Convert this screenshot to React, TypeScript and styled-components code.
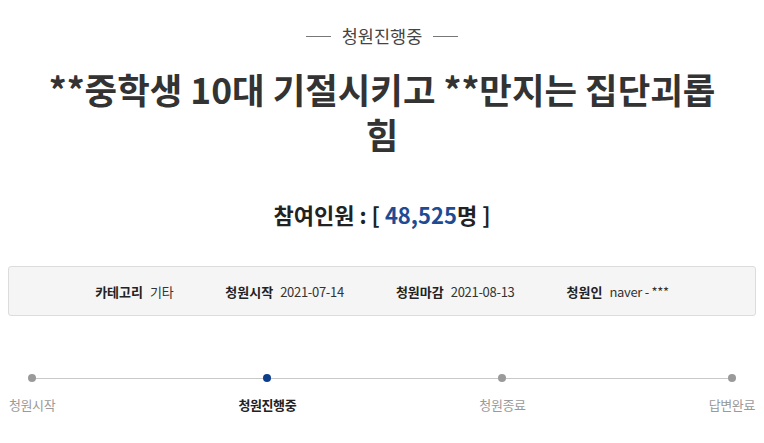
import React from "react";
import styled, { createGlobalStyle } from "styled-components";

const Global = createGlobalStyle`
  html, body { margin: 0; padding: 0; background: #fff; }
  body { font-family: "Noto Sans CJK KR", "Noto Sans", sans-serif; color: #333; }
`;

const Page = styled.div`
  width: 764px;
  padding-top: 24px;
  box-sizing: border-box;
`;

const Status = styled.div`
  display: flex;
  justify-content: center;
  align-items: center;
  gap: 11px;
  font-size: 17.5px;
  line-height: 24px;
  color: #444;
`;

const Rule = styled.span`
  width: 25px;
  height: 1px;
  background: #777;
`;

const Title = styled.h1`
  margin: 18px 0 0;
  padding: 0 40px;
  text-align: center;
  font-size: 35.4px;
  line-height: 45px;
  font-weight: 700;
  color: #333;
`;

const Count = styled.div`
  margin-top: 44px;
  text-align: center;
  font-size: 22px;
  line-height: 28px;
  font-weight: 700;
  color: #222;
`;

const Num = styled.span`
  color: #1d4b94;
`;

const InfoBox = styled.div`
  margin: 38px 8px 0;
  height: 50px;
  box-sizing: border-box;
  background: #f5f5f5;
  border: 1px solid #dcdcdc;
  border-radius: 3px;
  display: flex;
  justify-content: center;
  align-items: center;
  gap: 52px;
  font-size: 13px;
`;

const InfoItem = styled.div`
  display: flex;
  align-items: center;
  gap: 7px;
`;

const InfoLabel = styled.span`
  font-weight: 700;
  color: #222;
`;

const InfoValue = styled.span`
  color: #333;
  letter-spacing: -0.3px;
`;

const Steps = styled.div`
  position: relative;
  margin-top: 58px;
  padding: 0 9px;
  display: flex;
  justify-content: space-between;
  &::before {
    content: "";
    position: absolute;
    left: 33px;
    right: 34px;
    top: 4px;
    height: 1px;
    background: #c8c8c8;
  }
`;

const Step = styled.div`
  display: flex;
  flex-direction: column;
  align-items: center;
  position: relative;
`;

const Dot = styled.span<{ $active?: boolean }>`
  width: 8px;
  height: 8px;
  border-radius: 50%;
  background: ${(p) => (p.$active ? "#0c3e8c" : "#9a9a9a")};
`;

const StepLabel = styled.span<{ $active?: boolean }>`
  margin-top: 14px;
  font-size: 13px;
  line-height: 18px;
  font-weight: ${(p) => (p.$active ? 700 : 400)};
  color: ${(p) => (p.$active ? "#222" : "#9a9a9a")};
  letter-spacing: -0.4px;
`;

const steps = [
  { label: "청원시작" },
  { label: "청원진행중", active: true },
  { label: "청원종료" },
  { label: "답변완료" },
];

const info = [
  ["카테고리", "기타"],
  ["청원시작", "2021-07-14"],
  ["청원마감", "2021-08-13"],
  ["청원인", "naver - ***"],
];

export default function App() {
  return (
    <Page>
      <Global />
      <Status>
        <Rule />
        <span>청원진행중</span>
        <Rule />
      </Status>
      <Title>**중학생 10대 기절시키고 **만지는 집단괴롭힘</Title>
      <Count>
        참여인원 : [ <Num>48,525</Num>명 ]
      </Count>
      <InfoBox>
        {info.map(([l, v]) => (
          <InfoItem key={l}>
            <InfoLabel>{l}</InfoLabel>
            <InfoValue>{v}</InfoValue>
          </InfoItem>
        ))}
      </InfoBox>
      <Steps>
        {steps.map((s) => (
          <Step key={s.label}>
            <Dot $active={s.active} />
            <StepLabel $active={s.active}>{s.label}</StepLabel>
          </Step>
        ))}
      </Steps>
    </Page>
  );
}
